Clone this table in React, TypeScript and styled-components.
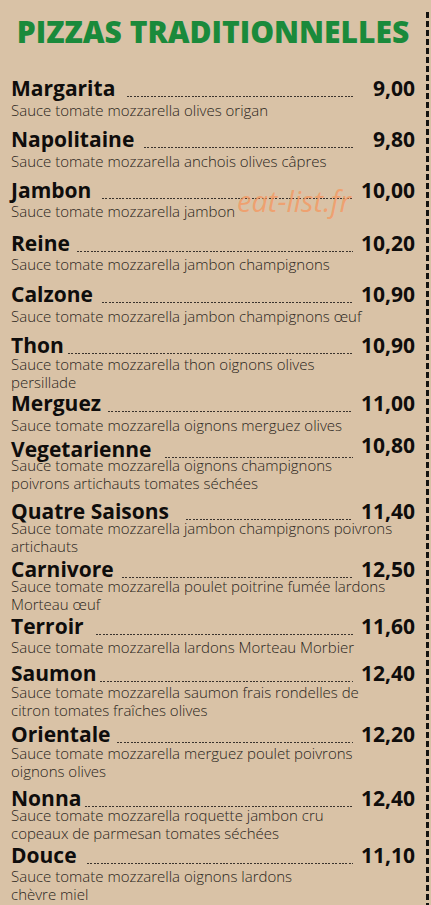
import React from 'react';
import styled, { createGlobalStyle } from 'styled-components';

const GlobalStyle = createGlobalStyle`
  html, body {
    margin: 0;
    padding: 0;
    background-color: #d9c2a6;
  }
  body {
    font-family: 'Open Sans', 'Noto Sans', sans-serif;
  }
`;

const Page = styled.div`
  position: relative;
  width: 431px;
  height: 905px;
  overflow: hidden;
  display: flex;
  background-color: #d9c2a6;
`;

const Content = styled.div`
  width: 426px;
  padding-top: 14px;
  box-sizing: border-box;
`;

const Divider = styled.div`
  width: 3px;
  margin-top: 12px;
  background: repeating-linear-gradient(to bottom, #141210 0 6px, transparent 6px 9px);
`;

const Title = styled.h1`
  margin: 0 0 26px;
  text-align: center;
  font-family: 'Open Sans', sans-serif;
  font-weight: 800;
  font-size: 30px;
  line-height: 36px;
  color: #1a8a3b;
`;

const Item = styled.div<{ $space: number }>`
  margin-top: ${(p) => p.$space}px;
  padding: 0 11px;
`;

const Row = styled.div`
  display: flex;
  align-items: flex-end;
  height: 24px;
`;

const Name = styled.span`
  font-weight: 700;
  font-size: 21px;
  line-height: 24px;
  color: #0f0d0c;
  white-space: nowrap;
`;

const Leader = styled.span<{ $lead: number }>`
  flex: 1;
  height: 1px;
  margin: 0 0 3px ${(p) => p.$lead}px;
  background: repeating-linear-gradient(to right, #3a332d 0 2px, transparent 2px 3.4px);
`;

const Price = styled.span<{ $lift: number }>`
  width: 62px;
  text-align: right;
  font-weight: 700;
  font-size: 21px;
  line-height: 24px;
  color: #0f0d0c;
  position: relative;
  top: ${(p) => -p.$lift}px;
`;

const Desc = styled.div<{ $shift: number }>`
  margin-top: ${(p) => p.$shift}px;
  font-weight: 300;
  font-size: 15px;
  line-height: 18px;
  color: #2a2520;
`;

const Watermark = styled.div`
  position: absolute;
  left: 237px;
  top: 186px;
  font-family: 'Open Sans', sans-serif;
  font-style: italic;
  font-weight: 400;
  font-size: 29px;
  line-height: 29px;
  color: rgba(245, 150, 95, 0.75);
  pointer-events: none;
`;

type Pizza = {
  name: string;
  price: string;
  lines: string[];
  space: number;
  shift: number;
  lead?: number;
  lift?: number;
};

const pizzas: Pizza[] = [
  { name: 'Margarita', price: '9,00', lines: ['Sauce tomate mozzarella olives origan'], space: 0, shift: 1, lead: 12 },
  { name: 'Napolitaine', price: '9,80', lines: ['Sauce tomate mozzarella anchois olives câpres'], space: 8, shift: 1, lead: 10 },
  { name: 'Jambon', price: '10,00', lines: ['Sauce tomate mozzarella jambon'], space: 8, shift: 0, lead: 11 },
  { name: 'Reine', price: '10,20', lines: ['Sauce tomate mozzarella jambon champignons'], space: 11, shift: 0, lead: 7 },
  { name: 'Calzone', price: '10,90', lines: ['Sauce tomate mozzarella jambon champignons œuf'], space: 9, shift: 1, lead: 9 },
  { name: 'Thon', price: '10,90', lines: ['Sauce tomate mozzarella thon oignons olives', 'persillade'], space: 8, shift: -2, lead: 4 },
  { name: 'Merguez', price: '11,00', lines: ['Sauce tomate mozzarella oignons merguez olives'], space: 0, shift: 1, lead: 7 },
  { name: 'Vegetarienne', price: '10,80', lines: ['Sauce tomate mozzarella oignons champignons', 'poivrons artichauts tomates séchées'], space: 3, shift: -5, lead: 13, lift: 4 },
  { name: 'Quatre Saisons', price: '11,40', lines: ['Sauce tomate mozzarella jambon champignons poivrons', 'artichauts'], space: 7, shift: -4, lead: 17 },
  { name: 'Carnivore', price: '12,50', lines: ['Sauce tomate mozzarella poulet poitrine fumée lardons', 'Morteau œuf'], space: 2, shift: -4, lead: 8 },
  { name: 'Terroir', price: '11,60', lines: ['Sauce tomate mozzarella lardons Morteau Morbier'], space: 1, shift: 0, lead: 12 },
  { name: 'Saumon', price: '12,40', lines: ['Sauce tomate mozzarella saumon frais rondelles de', 'citron tomates fraîches olives'], space: 5, shift: -2, lead: 4 },
  { name: 'Orientale', price: '12,20', lines: ['Sauce tomate mozzarella merguez poulet poivrons', 'oignons olives'], space: 3, shift: -2, lead: 7 },
  { name: 'Nonna', price: '12,40', lines: ['Sauce tomate mozzarella roquette jambon cru', 'copeaux de parmesan tomates séchées'], space: 6, shift: -4, lead: 4 },
  { name: 'Douce', price: '11,10', lines: ['Sauce tomate mozzarella oignons lardons', 'chèvre miel'], space: 1, shift: 0, lead: 10 },
];

export default function App() {
  return (
    <>
      <GlobalStyle />
      <Page>
        <Content>
          <Title>PIZZAS TRADITIONNELLES</Title>
          {pizzas.map((p) => (
            <Item key={p.name} $space={p.space}>
              <Row>
                <Name>{p.name}</Name>
                <Leader $lead={p.lead ?? 9} />
                <Price $lift={p.lift ?? 0}>{p.price}</Price>
              </Row>
              <Desc $shift={p.shift}>
                {p.lines.map((l, i) => (
                  <div key={i}>{l}</div>
                ))}
              </Desc>
            </Item>
          ))}
        </Content>
        <Divider />
        <Watermark>eat-list.fr</Watermark>
      </Page>
    </>
  );
}
